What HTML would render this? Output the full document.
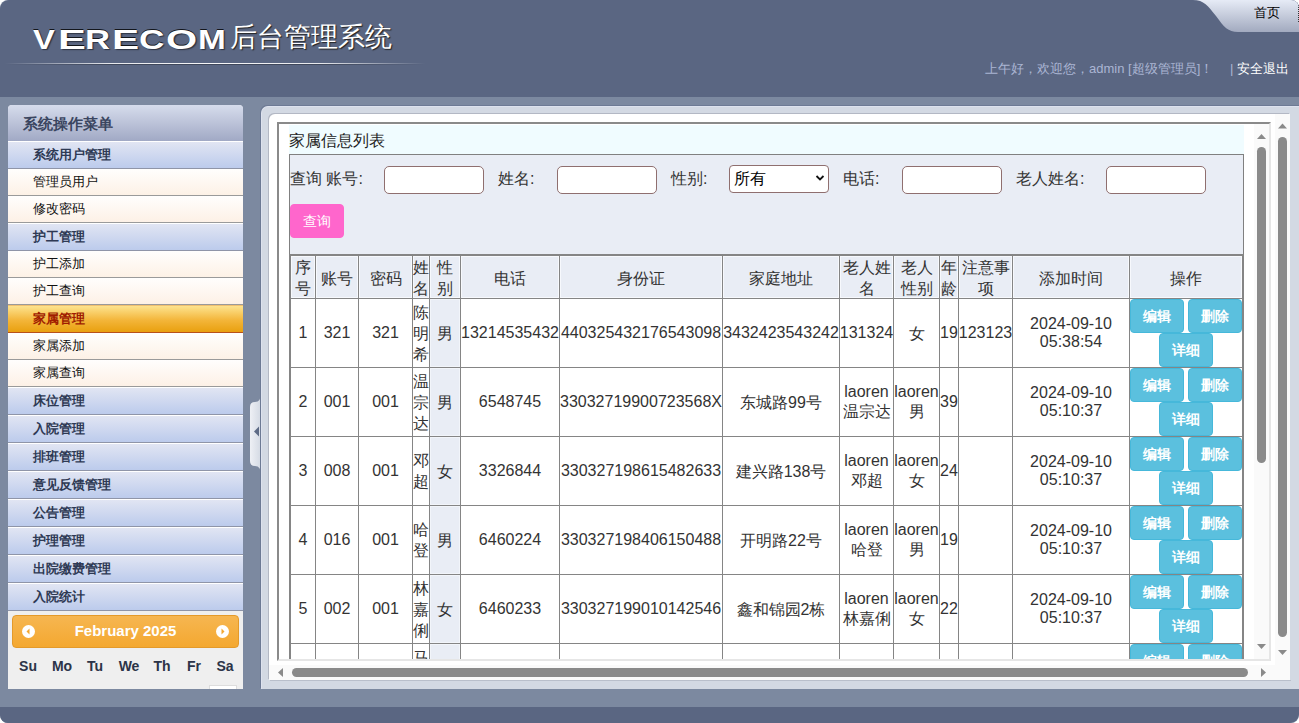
<!DOCTYPE html><html><head><meta charset="utf-8"><style>
*{box-sizing:border-box}
html,body{margin:0;padding:0}
body{width:1299px;height:723px;position:relative;overflow:hidden;background:#fff;font-family:"Liberation Sans",sans-serif}
.a{position:absolute}
.t{position:absolute;white-space:nowrap}
.cat{position:absolute;left:0;width:235px;height:28px;border-top:1px solid #fff;border-bottom:1px solid #8f95a8;background:linear-gradient(#e1e5f3,#bccbec);font-size:13px;font-weight:bold;color:#2e3954;line-height:26px;padding-left:25px}
.sub{position:absolute;left:0;width:235px;height:27px;border-bottom:1px solid #9a9a9a;background:linear-gradient(#fffefd,#fdf1e6);font-size:13px;color:#111;line-height:26px;padding-left:25px}
.cell{position:absolute;display:flex;align-items:center;justify-content:center;text-align:center;font-size:16px;color:#333;line-height:21px}
.vl{position:absolute;background:#858585}
.btn{position:absolute;width:54px;height:34px;background:#5bc0de;border:1px solid #46b8da;border-radius:4px;color:#fff;font-size:14px;line-height:32px;text-align:center;font-weight:bold}
.inp{position:absolute;width:100px;height:28px;background:#fff;border:1px solid #8f6f6f;border-radius:5px}
.lbl{position:absolute;font-size:16px;color:#333;line-height:20px;white-space:nowrap}
</style></head><body><div style="position:absolute;left:0;top:0;width:1299px;height:723px;border-radius:8px;overflow:hidden">

<div class="a" style="left:0;top:0;width:1299px;height:723px;background:#7c89a0"></div>
<div class="a" style="left:0;top:0;width:1299px;height:97px;background:#5a6682;border-top-left-radius:9px"></div>
<div class="a" style="left:0;top:707px;width:1299px;height:16px;background:#5a6682;border-bottom-right-radius:9px"></div>
<div class="a" style="left:0;top:0;width:10px;height:10px;background:#fff;z-index:-1"></div>
<div class="t" style="left:33.0px;top:24px;font-size:28px;font-weight:bold;color:#fff;line-height:31px;transform-origin:0 0;transform:scaleX(1.169);text-shadow:0 -1px 0 rgba(0,0,0,.8),1px 1px 1px rgba(0,0,0,.5)">V</div><div class="t" style="left:57.8px;top:24px;font-size:28px;font-weight:bold;color:#fff;line-height:31px;transform-origin:0 0;transform:scaleX(1.490);text-shadow:0 -1px 0 rgba(0,0,0,.8),1px 1px 1px rgba(0,0,0,.5)">E</div><div class="t" style="left:85.0px;top:24px;font-size:28px;font-weight:bold;color:#fff;line-height:31px;transform-origin:0 0;transform:scaleX(1.237);text-shadow:0 -1px 0 rgba(0,0,0,.8),1px 1px 1px rgba(0,0,0,.5)">R</div><div class="t" style="left:111.5px;top:24px;font-size:28px;font-weight:bold;color:#fff;line-height:31px;transform-origin:0 0;transform:scaleX(1.450);text-shadow:0 -1px 0 rgba(0,0,0,.8),1px 1px 1px rgba(0,0,0,.5)">E</div><div class="t" style="left:138.7px;top:24px;font-size:28px;font-weight:bold;color:#fff;line-height:31px;transform-origin:0 0;transform:scaleX(1.257);text-shadow:0 -1px 0 rgba(0,0,0,.8),1px 1px 1px rgba(0,0,0,.5)">C</div><div class="t" style="left:165.5px;top:24px;font-size:28px;font-weight:bold;color:#fff;line-height:31px;transform-origin:0 0;transform:scaleX(1.428);text-shadow:0 -1px 0 rgba(0,0,0,.8),1px 1px 1px rgba(0,0,0,.5)">O</div><div class="t" style="left:197.8px;top:24px;font-size:28px;font-weight:bold;color:#fff;line-height:31px;transform-origin:0 0;transform:scaleX(1.191);text-shadow:0 -1px 0 rgba(0,0,0,.8),1px 1px 1px rgba(0,0,0,.5)">M</div>
<div class="t" style="left:230px;top:19px;font-size:27px;color:#fff;text-shadow:1px 1px 1px #222">后台管理系统</div>
<div class="a" style="left:5px;top:63px;width:420px;height:1px;background:linear-gradient(90deg,rgba(255,255,255,0),rgba(255,255,255,0.85) 25%,rgba(255,255,255,0.95) 50%,rgba(255,255,255,0.85) 75%,rgba(255,255,255,0))"></div>
<div class="a" style="left:5px;top:64px;width:420px;height:1px;background:linear-gradient(90deg,rgba(0,0,0,0),rgba(0,0,0,0.3) 25%,rgba(0,0,0,0.3) 75%,rgba(0,0,0,0))"></div>
<svg class="a" style="left:1190px;top:0" width="109" height="33"><defs><linearGradient id="tg" x1="0" y1="0" x2="0" y2="1"><stop offset="0" stop-color="#e6ebf6"/><stop offset="1" stop-color="#a2aabf"/></linearGradient></defs><path d="M3 0 C 14 0, 18 6, 26 16 C 34 27, 38 32, 48 32 L 109 32 L 109 0 Z" fill="url(#tg)"/></svg>
<div class="t" style="left:1254px;top:5px;font-size:13px;color:#000;line-height:16px">首页</div>
<div class="a" style="left:1298px;top:5px;width:1px;height:18px;background:repeating-linear-gradient(#333 0 1px,transparent 1px 2px)"></div>
<div class="t" style="left:985px;top:61px;font-size:13px;color:#aab5d3;line-height:16px">上午好，欢迎您，admin [超级管理员]！</div>
<div class="t" style="left:1230px;top:61px;font-size:13px;color:#aab5d3;line-height:16px">|</div>
<div class="t" style="left:1237px;top:61px;font-size:13px;color:#fff;line-height:16px">安全退出</div>
<div class="a" style="left:8px;top:105px;width:235px;height:584px;background:#efefef;overflow:hidden;border-radius:4px 4px 0 0">
<div class="a" style="left:0;top:0;width:235px;height:36px;background:linear-gradient(#d6dcec,#a1a9c5);font-size:15px;font-weight:bold;color:#3a4560;line-height:38px;padding-left:15px">系统操作菜单</div>
<div class="cat" style="top:36px">系统用户管理</div>
<div class="sub" style="top:64px">管理员用户</div>
<div class="sub" style="top:91px">修改密码</div>
<div class="cat" style="top:118px">护工管理</div>
<div class="sub" style="top:146px">护工添加</div>
<div class="sub" style="top:173px">护工查询</div>
<div class="cat" style="top:200px;background:linear-gradient(#fde38e,#f3b539 55%,#e9a00f);color:#a01c00;border-top:1px solid #f0c070;border-bottom:1px solid #b8501a">家属管理</div>
<div class="sub" style="top:228px">家属添加</div>
<div class="sub" style="top:255px">家属查询</div>
<div class="cat" style="top:282px">床位管理</div>
<div class="cat" style="top:310px">入院管理</div>
<div class="cat" style="top:338px">排班管理</div>
<div class="cat" style="top:366px">意见反馈管理</div>
<div class="cat" style="top:394px">公告管理</div>
<div class="cat" style="top:422px">护理管理</div>
<div class="cat" style="top:450px">出院缴费管理</div>
<div class="cat" style="top:478px">入院统计</div>
<div class="a" style="left:4px;top:510px;width:227px;height:33px;border-radius:4px;background:linear-gradient(#f6b651,#f4a830);border:1px solid #e49a2a"></div>
<div class="a" style="left:14px;top:520px;width:13px;height:13px;border-radius:50%;background:#fff"></div>
<svg class="a" style="left:14px;top:520px" width="13" height="13"><path d="M7.5 3.5 L4.5 6.5 L7.5 9.5 Z" fill="#f4a830"/></svg>
<div class="a" style="left:208px;top:520px;width:13px;height:13px;border-radius:50%;background:#fff"></div>
<svg class="a" style="left:208px;top:520px" width="13" height="13"><path d="M5.5 3.5 L8.5 6.5 L5.5 9.5 Z" fill="#f4a830"/></svg>
<div class="t" style="left:0;width:235px;text-align:center;top:517px;font-size:15px;font-weight:bold;color:#fff;line-height:18px">February 2025</div>
<div class="t" style="left:0px;width:40px;text-align:center;top:553px;font-size:14px;font-weight:bold;color:#2c3448;line-height:17px">Su</div>
<div class="t" style="left:34px;width:40px;text-align:center;top:553px;font-size:14px;font-weight:bold;color:#2c3448;line-height:17px">Mo</div>
<div class="t" style="left:67px;width:40px;text-align:center;top:553px;font-size:14px;font-weight:bold;color:#2c3448;line-height:17px">Tu</div>
<div class="t" style="left:101px;width:40px;text-align:center;top:553px;font-size:14px;font-weight:bold;color:#2c3448;line-height:17px">We</div>
<div class="t" style="left:134px;width:40px;text-align:center;top:553px;font-size:14px;font-weight:bold;color:#2c3448;line-height:17px">Th</div>
<div class="t" style="left:166px;width:40px;text-align:center;top:553px;font-size:14px;font-weight:bold;color:#2c3448;line-height:17px">Fr</div>
<div class="t" style="left:197px;width:40px;text-align:center;top:553px;font-size:14px;font-weight:bold;color:#2c3448;line-height:17px">Sa</div>
<div class="a" style="left:201px;top:580px;width:28px;height:10px;background:#fff;border:1px solid #ddd"></div>
</div>
<svg class="a" style="left:248px;top:390px" width="16" height="90"><defs><linearGradient id="hg" x1="0" y1="0" x2="1" y2="0"><stop offset="0" stop-color="#eef0f5"/><stop offset="1" stop-color="#d3d9e3"/></linearGradient></defs><path d="M13 3 Q13 12 7 12 Q2 12 2 17 L2 71 Q2 76 7 76 Q13 76 13 85 Z" fill="url(#hg)"/><path d="M11 36.5 L6 41.5 L11 46.5 Z" fill="#5d6a85"/></svg>
<div class="a" style="left:261px;top:106px;width:1050px;height:583px;background:#d3d9e3;border-radius:7px 0 0 0;box-shadow:-1px -1px 0 #6d7a94;border-top:1px solid #dde2ee;border-left:1px solid #dde2ee"></div>
<div class="a" style="left:269px;top:114px;width:1021px;height:566px;background:#fff;border-radius:6px 0 0 0;box-shadow:-1px -1px 0 #b3b8c4"></div>
<div class="a" style="left:270px;top:680px;width:1021px;height:1px;background:#b9bfcb"></div>
<div class="a" style="left:277px;top:122px;width:994px;height:539px;border-top:2px solid #8a8a8a;border-left:2px solid #8a8a8a;border-right:2px solid #e6e6e6;border-bottom:2px solid #e6e6e6"></div>
<div class="a" style="left:289px;top:125px;width:955px;height:29px;background:#f0fcff"></div>
<div class="t" style="left:289px;top:131px;font-size:16px;color:#222;line-height:20px">家属信息列表</div>
<div class="a" style="left:289px;top:154px;width:955px;height:101px;background:#e9edf5;border-top:1px solid #808080;border-left:1px solid #808080;border-right:1px solid #808080"></div>
<div class="lbl" style="left:290px;top:169px">查询 账号:</div>
<div class="inp" style="left:384px;top:166px"></div>
<div class="lbl" style="left:498px;top:169px">姓名:</div>
<div class="inp" style="left:557px;top:166px"></div>
<div class="lbl" style="left:671px;top:169px">性别:</div>
<div class="inp" style="left:729px;top:165px;border-radius:4px"></div>
<div class="lbl" style="left:734px;top:169px;color:#000">所有</div>
<svg class="a" style="left:815px;top:174px" width="10" height="8"><path d="M1.5 2 L5 5.5 L8.5 2" stroke="#111" stroke-width="1.8" fill="none"/></svg>
<div class="lbl" style="left:843px;top:169px">电话:</div>
<div class="inp" style="left:902px;top:166px"></div>
<div class="lbl" style="left:1016px;top:169px">老人姓名:</div>
<div class="inp" style="left:1106px;top:166px"></div>
<div class="btn" style="left:290px;top:204px;background:#ff66cc;border-color:#ff66cc;font-weight:normal">查询</div>
<div class="a" style="left:279px;top:124px;width:975px;height:535px;overflow:hidden">
<div class="a" style="left:10px;top:130px;width:955px;height:44px;background:#e9edf5"></div>
<div class="a" style="left:151px;top:175px;width:30px;height:68px;background:#e9edf5;box-shadow:inset 0 0 0 1px #f2f5fa"></div>
<div class="a" style="left:151px;top:244px;width:30px;height:68px;background:#e9edf5;box-shadow:inset 0 0 0 1px #f2f5fa"></div>
<div class="a" style="left:151px;top:313px;width:30px;height:68px;background:#e9edf5;box-shadow:inset 0 0 0 1px #f2f5fa"></div>
<div class="a" style="left:151px;top:382px;width:30px;height:68px;background:#e9edf5;box-shadow:inset 0 0 0 1px #f2f5fa"></div>
<div class="a" style="left:151px;top:451px;width:30px;height:68px;background:#e9edf5;box-shadow:inset 0 0 0 1px #f2f5fa"></div>
<div class="a" style="left:151px;top:520px;width:30px;height:68px;background:#e9edf5;box-shadow:inset 0 0 0 1px #f2f5fa"></div>
<div class="cell" style="left:12px;top:132px;width:24px;height:42px;box-shadow:inset 0 0 0 1px #f7f9fd;padding-top:2px;flex-direction:column"><div style="height:21px;line-height:21px">序</div><div style="height:21px;line-height:21px">号</div></div>
<div class="cell" style="left:37px;top:132px;width:42px;height:42px;box-shadow:inset 0 0 0 1px #f7f9fd;padding-top:2px;flex-direction:column"><div style="height:21px;line-height:21px">账号</div></div>
<div class="cell" style="left:80px;top:132px;width:53px;height:42px;box-shadow:inset 0 0 0 1px #f7f9fd;padding-top:2px;flex-direction:column"><div style="height:21px;line-height:21px">密码</div></div>
<div class="cell" style="left:134px;top:132px;width:16px;height:42px;box-shadow:inset 0 0 0 1px #f7f9fd;padding-top:2px;flex-direction:column"><div style="height:21px;line-height:21px">姓</div><div style="height:21px;line-height:21px">名</div></div>
<div class="cell" style="left:151px;top:132px;width:30px;height:42px;box-shadow:inset 0 0 0 1px #f7f9fd;padding-top:2px;flex-direction:column"><div style="height:21px;line-height:21px">性</div><div style="height:21px;line-height:21px">别</div></div>
<div class="cell" style="left:182px;top:132px;width:98px;height:42px;box-shadow:inset 0 0 0 1px #f7f9fd;padding-top:2px;flex-direction:column"><div style="height:21px;line-height:21px">电话</div></div>
<div class="cell" style="left:281px;top:132px;width:162px;height:42px;box-shadow:inset 0 0 0 1px #f7f9fd;padding-top:2px;flex-direction:column"><div style="height:21px;line-height:21px">身份证</div></div>
<div class="cell" style="left:444px;top:132px;width:116px;height:42px;box-shadow:inset 0 0 0 1px #f7f9fd;padding-top:2px;flex-direction:column"><div style="height:21px;line-height:21px">家庭地址</div></div>
<div class="cell" style="left:561px;top:132px;width:53px;height:42px;box-shadow:inset 0 0 0 1px #f7f9fd;padding-top:2px;flex-direction:column"><div style="height:21px;line-height:21px">老人姓</div><div style="height:21px;line-height:21px">名</div></div>
<div class="cell" style="left:615px;top:132px;width:45px;height:42px;box-shadow:inset 0 0 0 1px #f7f9fd;padding-top:2px;flex-direction:column"><div style="height:21px;line-height:21px">老人</div><div style="height:21px;line-height:21px">性别</div></div>
<div class="cell" style="left:661px;top:132px;width:18px;height:42px;box-shadow:inset 0 0 0 1px #f7f9fd;padding-top:2px;flex-direction:column"><div style="height:21px;line-height:21px">年</div><div style="height:21px;line-height:21px">龄</div></div>
<div class="cell" style="left:680px;top:132px;width:53px;height:42px;box-shadow:inset 0 0 0 1px #f7f9fd;padding-top:2px;flex-direction:column"><div style="height:21px;line-height:21px">注意事</div><div style="height:21px;line-height:21px">项</div></div>
<div class="cell" style="left:734px;top:132px;width:116px;height:42px;box-shadow:inset 0 0 0 1px #f7f9fd;padding-top:2px;flex-direction:column"><div style="height:21px;line-height:21px">添加时间</div></div>
<div class="cell" style="left:851px;top:132px;width:112px;height:42px;box-shadow:inset 0 0 0 1px #f7f9fd;padding-top:2px;flex-direction:column"><div style="height:21px;line-height:21px">操作</div></div>
<div class="cell" style="left:12px;top:175px;width:24px;height:68px;;flex-direction:column"><div style="height:18px;line-height:18px">1</div></div>
<div class="cell" style="left:37px;top:175px;width:42px;height:68px;;flex-direction:column"><div style="height:18px;line-height:18px">321</div></div>
<div class="cell" style="left:80px;top:175px;width:53px;height:68px;;flex-direction:column"><div style="height:18px;line-height:18px">321</div></div>
<div class="cell" style="left:134px;top:175px;width:16px;height:68px;;flex-direction:column"><div style="height:21px;line-height:21px">陈</div><div style="height:21px;line-height:21px">明</div><div style="height:21px;line-height:21px">希</div></div>
<div class="cell" style="left:151px;top:175px;width:30px;height:68px;;flex-direction:column"><div style="height:21px;line-height:21px">男</div></div>
<div class="cell" style="left:182px;top:175px;width:98px;height:68px;;flex-direction:column"><div style="height:18px;line-height:18px">13214535432</div></div>
<div class="cell" style="left:281px;top:175px;width:162px;height:68px;;flex-direction:column"><div style="height:18px;line-height:18px">440325432176543098</div></div>
<div class="cell" style="left:444px;top:175px;width:116px;height:68px;;flex-direction:column"><div style="height:18px;line-height:18px">3432423543242</div></div>
<div class="cell" style="left:561px;top:175px;width:53px;height:68px;;flex-direction:column"><div style="height:18px;line-height:18px">131324</div></div>
<div class="cell" style="left:615px;top:175px;width:45px;height:68px;;flex-direction:column"><div style="height:21px;line-height:21px">女</div></div>
<div class="cell" style="left:661px;top:175px;width:18px;height:68px;;flex-direction:column"><div style="height:18px;line-height:18px">19</div></div>
<div class="cell" style="left:680px;top:175px;width:53px;height:68px;;flex-direction:column"><div style="height:18px;line-height:18px">123123</div></div>
<div class="cell" style="left:734px;top:175px;width:116px;height:68px;;flex-direction:column"><div style="height:18px;line-height:18px">2024-09-10</div><div style="height:18px;line-height:18px">05:38:54</div></div>
<div class="btn" style="left:851px;top:175px">编辑</div>
<div class="btn" style="left:909px;top:175px">删除</div>
<div class="btn" style="left:880px;top:209px">详细</div>
<div class="cell" style="left:12px;top:244px;width:24px;height:68px;;flex-direction:column"><div style="height:18px;line-height:18px">2</div></div>
<div class="cell" style="left:37px;top:244px;width:42px;height:68px;;flex-direction:column"><div style="height:18px;line-height:18px">001</div></div>
<div class="cell" style="left:80px;top:244px;width:53px;height:68px;;flex-direction:column"><div style="height:18px;line-height:18px">001</div></div>
<div class="cell" style="left:134px;top:244px;width:16px;height:68px;;flex-direction:column"><div style="height:21px;line-height:21px">温</div><div style="height:21px;line-height:21px">宗</div><div style="height:21px;line-height:21px">达</div></div>
<div class="cell" style="left:151px;top:244px;width:30px;height:68px;;flex-direction:column"><div style="height:21px;line-height:21px">男</div></div>
<div class="cell" style="left:182px;top:244px;width:98px;height:68px;;flex-direction:column"><div style="height:18px;line-height:18px">6548745</div></div>
<div class="cell" style="left:281px;top:244px;width:162px;height:68px;;flex-direction:column"><div style="height:18px;line-height:18px">33032719900723568X</div></div>
<div class="cell" style="left:444px;top:244px;width:116px;height:68px;;flex-direction:column"><div style="height:21px;line-height:21px">东城路99号</div></div>
<div class="cell" style="left:561px;top:244px;width:53px;height:68px;;flex-direction:column"><div style="height:18px;line-height:18px">laoren</div><div style="height:21px;line-height:21px">温宗达</div></div>
<div class="cell" style="left:615px;top:244px;width:45px;height:68px;;flex-direction:column"><div style="height:18px;line-height:18px">laoren</div><div style="height:21px;line-height:21px">男</div></div>
<div class="cell" style="left:661px;top:244px;width:18px;height:68px;;flex-direction:column"><div style="height:18px;line-height:18px">39</div></div>
<div class="cell" style="left:680px;top:244px;width:53px;height:68px;;flex-direction:column"></div>
<div class="cell" style="left:734px;top:244px;width:116px;height:68px;;flex-direction:column"><div style="height:18px;line-height:18px">2024-09-10</div><div style="height:18px;line-height:18px">05:10:37</div></div>
<div class="btn" style="left:851px;top:244px">编辑</div>
<div class="btn" style="left:909px;top:244px">删除</div>
<div class="btn" style="left:880px;top:278px">详细</div>
<div class="cell" style="left:12px;top:313px;width:24px;height:68px;;flex-direction:column"><div style="height:18px;line-height:18px">3</div></div>
<div class="cell" style="left:37px;top:313px;width:42px;height:68px;;flex-direction:column"><div style="height:18px;line-height:18px">008</div></div>
<div class="cell" style="left:80px;top:313px;width:53px;height:68px;;flex-direction:column"><div style="height:18px;line-height:18px">001</div></div>
<div class="cell" style="left:134px;top:313px;width:16px;height:68px;;flex-direction:column"><div style="height:21px;line-height:21px">邓</div><div style="height:21px;line-height:21px">超</div></div>
<div class="cell" style="left:151px;top:313px;width:30px;height:68px;;flex-direction:column"><div style="height:21px;line-height:21px">女</div></div>
<div class="cell" style="left:182px;top:313px;width:98px;height:68px;;flex-direction:column"><div style="height:18px;line-height:18px">3326844</div></div>
<div class="cell" style="left:281px;top:313px;width:162px;height:68px;;flex-direction:column"><div style="height:18px;line-height:18px">330327198615482633</div></div>
<div class="cell" style="left:444px;top:313px;width:116px;height:68px;;flex-direction:column"><div style="height:21px;line-height:21px">建兴路138号</div></div>
<div class="cell" style="left:561px;top:313px;width:53px;height:68px;;flex-direction:column"><div style="height:18px;line-height:18px">laoren</div><div style="height:21px;line-height:21px">邓超</div></div>
<div class="cell" style="left:615px;top:313px;width:45px;height:68px;;flex-direction:column"><div style="height:18px;line-height:18px">laoren</div><div style="height:21px;line-height:21px">女</div></div>
<div class="cell" style="left:661px;top:313px;width:18px;height:68px;;flex-direction:column"><div style="height:18px;line-height:18px">24</div></div>
<div class="cell" style="left:680px;top:313px;width:53px;height:68px;;flex-direction:column"></div>
<div class="cell" style="left:734px;top:313px;width:116px;height:68px;;flex-direction:column"><div style="height:18px;line-height:18px">2024-09-10</div><div style="height:18px;line-height:18px">05:10:37</div></div>
<div class="btn" style="left:851px;top:313px">编辑</div>
<div class="btn" style="left:909px;top:313px">删除</div>
<div class="btn" style="left:880px;top:347px">详细</div>
<div class="cell" style="left:12px;top:382px;width:24px;height:68px;;flex-direction:column"><div style="height:18px;line-height:18px">4</div></div>
<div class="cell" style="left:37px;top:382px;width:42px;height:68px;;flex-direction:column"><div style="height:18px;line-height:18px">016</div></div>
<div class="cell" style="left:80px;top:382px;width:53px;height:68px;;flex-direction:column"><div style="height:18px;line-height:18px">001</div></div>
<div class="cell" style="left:134px;top:382px;width:16px;height:68px;;flex-direction:column"><div style="height:21px;line-height:21px">哈</div><div style="height:21px;line-height:21px">登</div></div>
<div class="cell" style="left:151px;top:382px;width:30px;height:68px;;flex-direction:column"><div style="height:21px;line-height:21px">男</div></div>
<div class="cell" style="left:182px;top:382px;width:98px;height:68px;;flex-direction:column"><div style="height:18px;line-height:18px">6460224</div></div>
<div class="cell" style="left:281px;top:382px;width:162px;height:68px;;flex-direction:column"><div style="height:18px;line-height:18px">330327198406150488</div></div>
<div class="cell" style="left:444px;top:382px;width:116px;height:68px;;flex-direction:column"><div style="height:21px;line-height:21px">开明路22号</div></div>
<div class="cell" style="left:561px;top:382px;width:53px;height:68px;;flex-direction:column"><div style="height:18px;line-height:18px">laoren</div><div style="height:21px;line-height:21px">哈登</div></div>
<div class="cell" style="left:615px;top:382px;width:45px;height:68px;;flex-direction:column"><div style="height:18px;line-height:18px">laoren</div><div style="height:21px;line-height:21px">男</div></div>
<div class="cell" style="left:661px;top:382px;width:18px;height:68px;;flex-direction:column"><div style="height:18px;line-height:18px">19</div></div>
<div class="cell" style="left:680px;top:382px;width:53px;height:68px;;flex-direction:column"></div>
<div class="cell" style="left:734px;top:382px;width:116px;height:68px;;flex-direction:column"><div style="height:18px;line-height:18px">2024-09-10</div><div style="height:18px;line-height:18px">05:10:37</div></div>
<div class="btn" style="left:851px;top:382px">编辑</div>
<div class="btn" style="left:909px;top:382px">删除</div>
<div class="btn" style="left:880px;top:416px">详细</div>
<div class="cell" style="left:12px;top:451px;width:24px;height:68px;;flex-direction:column"><div style="height:18px;line-height:18px">5</div></div>
<div class="cell" style="left:37px;top:451px;width:42px;height:68px;;flex-direction:column"><div style="height:18px;line-height:18px">002</div></div>
<div class="cell" style="left:80px;top:451px;width:53px;height:68px;;flex-direction:column"><div style="height:18px;line-height:18px">001</div></div>
<div class="cell" style="left:134px;top:451px;width:16px;height:68px;;flex-direction:column"><div style="height:21px;line-height:21px">林</div><div style="height:21px;line-height:21px">嘉</div><div style="height:21px;line-height:21px">俐</div></div>
<div class="cell" style="left:151px;top:451px;width:30px;height:68px;;flex-direction:column"><div style="height:21px;line-height:21px">女</div></div>
<div class="cell" style="left:182px;top:451px;width:98px;height:68px;;flex-direction:column"><div style="height:18px;line-height:18px">6460233</div></div>
<div class="cell" style="left:281px;top:451px;width:162px;height:68px;;flex-direction:column"><div style="height:18px;line-height:18px">330327199010142546</div></div>
<div class="cell" style="left:444px;top:451px;width:116px;height:68px;;flex-direction:column"><div style="height:21px;line-height:21px">鑫和锦园2栋</div></div>
<div class="cell" style="left:561px;top:451px;width:53px;height:68px;;flex-direction:column"><div style="height:18px;line-height:18px">laoren</div><div style="height:21px;line-height:21px">林嘉俐</div></div>
<div class="cell" style="left:615px;top:451px;width:45px;height:68px;;flex-direction:column"><div style="height:18px;line-height:18px">laoren</div><div style="height:21px;line-height:21px">女</div></div>
<div class="cell" style="left:661px;top:451px;width:18px;height:68px;;flex-direction:column"><div style="height:18px;line-height:18px">22</div></div>
<div class="cell" style="left:680px;top:451px;width:53px;height:68px;;flex-direction:column"></div>
<div class="cell" style="left:734px;top:451px;width:116px;height:68px;;flex-direction:column"><div style="height:18px;line-height:18px">2024-09-10</div><div style="height:18px;line-height:18px">05:10:37</div></div>
<div class="btn" style="left:851px;top:451px">编辑</div>
<div class="btn" style="left:909px;top:451px">删除</div>
<div class="btn" style="left:880px;top:485px">详细</div>
<div class="cell" style="left:12px;top:520px;width:24px;height:68px;;flex-direction:column"></div>
<div class="cell" style="left:37px;top:520px;width:42px;height:68px;;flex-direction:column"></div>
<div class="cell" style="left:80px;top:520px;width:53px;height:68px;;flex-direction:column"></div>
<div class="cell" style="left:134px;top:520px;width:16px;height:68px;;flex-direction:column"><div style="height:21px;line-height:21px">马</div><div style="height:21px;line-height:21px">　</div><div style="height:21px;line-height:21px">　</div></div>
<div class="cell" style="left:151px;top:520px;width:30px;height:68px;;flex-direction:column"></div>
<div class="cell" style="left:182px;top:520px;width:98px;height:68px;;flex-direction:column"></div>
<div class="cell" style="left:281px;top:520px;width:162px;height:68px;;flex-direction:column"></div>
<div class="cell" style="left:444px;top:520px;width:116px;height:68px;;flex-direction:column"></div>
<div class="cell" style="left:561px;top:520px;width:53px;height:68px;;flex-direction:column"></div>
<div class="cell" style="left:615px;top:520px;width:45px;height:68px;;flex-direction:column"></div>
<div class="cell" style="left:661px;top:520px;width:18px;height:68px;;flex-direction:column"></div>
<div class="cell" style="left:680px;top:520px;width:53px;height:68px;;flex-direction:column"></div>
<div class="cell" style="left:734px;top:520px;width:116px;height:68px;;flex-direction:column"></div>
<div class="btn" style="left:851px;top:520px">编辑</div>
<div class="btn" style="left:909px;top:520px">删除</div>
<div class="btn" style="left:880px;top:554px">详细</div>
<div class="vl" style="left:10px;top:130px;width:2px;height:458px"></div>
<div class="vl" style="left:36px;top:130px;width:1px;height:458px"></div>
<div class="vl" style="left:79px;top:130px;width:1px;height:458px"></div>
<div class="vl" style="left:133px;top:130px;width:1px;height:458px"></div>
<div class="vl" style="left:150px;top:130px;width:1px;height:458px"></div>
<div class="vl" style="left:181px;top:130px;width:1px;height:458px"></div>
<div class="vl" style="left:280px;top:130px;width:1px;height:458px"></div>
<div class="vl" style="left:443px;top:130px;width:1px;height:458px"></div>
<div class="vl" style="left:560px;top:130px;width:1px;height:458px"></div>
<div class="vl" style="left:614px;top:130px;width:1px;height:458px"></div>
<div class="vl" style="left:660px;top:130px;width:1px;height:458px"></div>
<div class="vl" style="left:679px;top:130px;width:1px;height:458px"></div>
<div class="vl" style="left:733px;top:130px;width:1px;height:458px"></div>
<div class="vl" style="left:850px;top:130px;width:1px;height:458px"></div>
<div class="vl" style="left:963px;top:130px;width:2px;height:458px"></div>
<div class="vl" style="left:10px;top:130px;width:955px;height:2px"></div>
<div class="vl" style="left:10px;top:174px;width:955px;height:1px"></div>
<div class="vl" style="left:10px;top:243px;width:955px;height:1px"></div>
<div class="vl" style="left:10px;top:312px;width:955px;height:1px"></div>
<div class="vl" style="left:10px;top:381px;width:955px;height:1px"></div>
<div class="vl" style="left:10px;top:450px;width:955px;height:1px"></div>
<div class="vl" style="left:10px;top:519px;width:955px;height:1px"></div>
<div class="vl" style="left:10px;top:588px;width:955px;height:1px"></div>
</div>
<div class="a" style="left:1254px;top:124px;width:15px;height:535px;background:#fafafa"></div>
<div class="a" style="left:1275px;top:114px;width:15px;height:566px;background:#fafafa"></div>
<div class="a" style="left:269px;top:665px;width:1021px;height:15px;background:#fafafa"></div>
<div class="a" style="left:1257px;top:147px;width:9px;height:316px;border-radius:4.5px;background:#8a8a8a"></div>
<div class="a" style="left:1278px;top:137px;width:9px;height:500px;border-radius:4.5px;background:#8a8a8a"></div>
<div class="a" style="left:292px;top:668px;width:956px;height:9px;border-radius:4.5px;background:#8a8a8a"></div>
<svg class="a" style="left:0;top:0" width="1299" height="723"><polygon points="1257.0,139.0 1261.5,134.0 1266.0,139.0" fill="#8a8a8a"/><polygon points="1278.0,128.5 1282.5,123.5 1287.0,128.5" fill="#8a8a8a"/><polygon points="1257.0,644.0 1261.5,649.0 1266.0,644.0" fill="#8a8a8a"/><polygon points="1278.0,650.0 1282.5,655.0 1287.0,650.0" fill="#8a8a8a"/><polygon points="283.0,668.0 278.0,672.5 283.0,677.0" fill="#8a8a8a"/><polygon points="1261.0,668.0 1266.0,672.5 1261.0,677.0" fill="#8a8a8a"/></svg>
</div></body></html>
